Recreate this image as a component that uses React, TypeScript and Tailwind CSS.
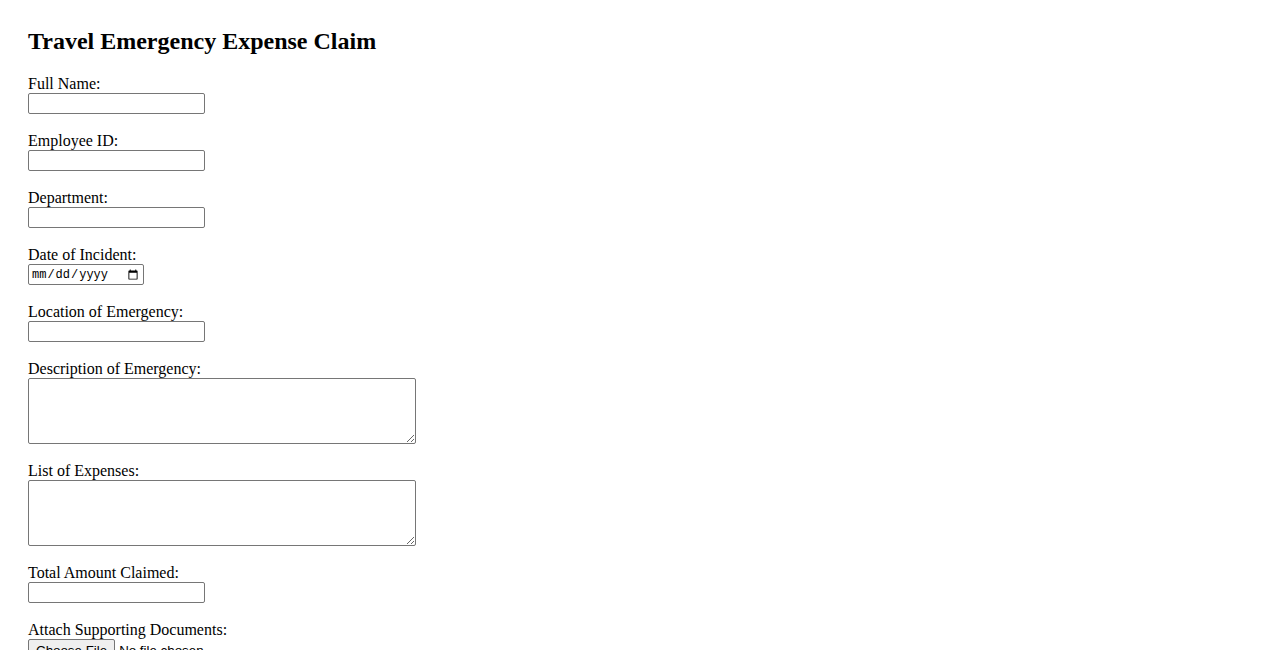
const textFields = [
  { id: 'fullName', label: 'Full Name:' },
  { id: 'employeeId', label: 'Employee ID:' },
  { id: 'department', label: 'Department:' },
];

function Label({ htmlFor, children }: { htmlFor: string; children: React.ReactNode }) {
  return (
    <label htmlFor={htmlFor} className="block h-[19px] text-[16px] leading-[19px]">
      {children}
    </label>
  );
}

const inputCls =
  'block h-[21px] w-[177px] rounded-[2px] border border-[#767676] bg-white px-[2px] text-[13.33px]';
const areaCls =
  'block h-[66px] w-[388px] rounded-[2px] border border-[#767676] bg-white p-[2px] text-[13.33px]';

export default function App() {
  return (
    <div className="min-h-screen bg-white px-[28px] pt-[27px] font-['Liberation_Serif',serif] text-black">
      <h2 className="mb-[19px] text-[24px] font-bold leading-[28px]">
        Travel Emergency Expense Claim
      </h2>
      <form className="flex flex-col gap-[17px]" onSubmit={(e) => e.preventDefault()}>
        {textFields.map((f) => (
          <div key={f.id}>
            <Label htmlFor={f.id}>{f.label}</Label>
            <input id={f.id} type="text" className={inputCls} />
          </div>
        ))}
        <div>
          <Label htmlFor="date">Date of Incident:</Label>
          <input
            id="date"
            type="date"
            className="block h-[21px] w-[116px] rounded-[2px] border border-[#767676] bg-white px-[2px] font-['Liberation_Mono',monospace] text-[12px]"
          />
        </div>
        <div>
          <Label htmlFor="location">Location of Emergency:</Label>
          <input id="location" type="text" className={inputCls} />
        </div>
        <div>
          <Label htmlFor="description">Description of Emergency:</Label>
          <textarea id="description" className={areaCls} />
        </div>
        <div>
          <Label htmlFor="expenses">List of Expenses:</Label>
          <textarea id="expenses" className={areaCls} />
        </div>
        <div>
          <Label htmlFor="total">Total Amount Claimed:</Label>
          <input id="total" type="text" className={inputCls} />
        </div>
        <div>
          <Label htmlFor="docs">Attach Supporting Documents:</Label>
          <input
            id="docs"
            type="file"
            className="block font-['Liberation_Sans',sans-serif] text-[13.33px] file:mr-[4px] file:rounded-[2px] file:border file:border-[#767676] file:bg-[#efefef] file:px-[7px] file:py-[1px]"
          />
        </div>
        <button type="submit" className="self-start">
          Submit Claim
        </button>
      </form>
    </div>
  );
}
